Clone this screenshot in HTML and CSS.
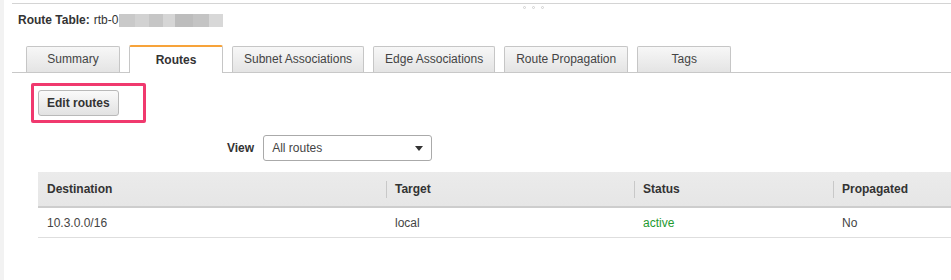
FILE: index.html
```html
<!DOCTYPE html>
<html lang="en">
<head>
    <meta charset="UTF-8">
    <meta name="viewport" content="width=device-width, initial-scale=1.0">
    <title>Route Table</title>
    <link rel="stylesheet" href="styles.css">
</head>
<body>
    <div class="panel">
        <div class="topline"></div>
        <div class="grip"><i></i><i></i><i></i></div>
        <div class="title"><b>Route Table:</b> rtb-0<span class="masked"></span></div>

        <ul class="tabs">
            <li class="tab">Summary</li>
            <li class="tab active">Routes</li>
            <li class="tab">Subnet Associations</li>
            <li class="tab">Edge Associations</li>
            <li class="tab">Route Propagation</li>
            <li class="tab">Tags</li>
        </ul>

        <div class="toolbar">
            <div class="highlight">
                <button class="btn">Edit routes</button>
            </div>
        </div>

        <div class="view-row">
            <label>View</label>
            <div class="select"><span>All routes</span><span class="caret"></span></div>
        </div>

        <table class="routes">
            <colgroup>
                <col style="width: 348px">
                <col style="width: 248px">
                <col style="width: 199px">
                <col>
            </colgroup>
            <thead>
                <tr>
                    <th>Destination</th>
                    <th>Target</th>
                    <th>Status</th>
                    <th>Propagated</th>
                </tr>
            </thead>
            <tbody>
                <tr>
                    <td>10.3.0.0/16</td>
                    <td>local</td>
                    <td class="ok">active</td>
                    <td>No</td>
                </tr>
            </tbody>
        </table>
    </div>
</body>
</html>
```

FILE: styles.css
```css
body {
    margin: 0;
    font-family: "Liberation Sans", Arial, sans-serif;
    font-size: 12px;
    color: #444;
    background: #fff;
    border-left: 4px solid #f2f2f2;
    height: 280px;
    box-sizing: border-box;
    overflow: hidden;
}
.panel {
    margin-left: 8px;
}
.topline {
    height: 3px;
    border-bottom: 1px solid #d4d4d4;
}
.grip {
    display: flex;
    gap: 6px;
    height: 5px;
    padding: 2px 0 0 511px;
}
.grip i {
    width: 3px;
    height: 3px;
    border: 1px solid #cfcfcf;
    border-radius: 50%;
    box-sizing: border-box;
}
.title {
    margin-top: 2px;
    padding-left: 6px;
    line-height: 14px;
    color: #333;
    display: flex;
    align-items: center;
}
.title b {
    margin-right: 4px;
}
.masked {
    display: inline-block;
    width: 104px;
    height: 13px;
    margin-left: 1px;
    background: linear-gradient(to right,
        #c9c9c9 0, #c9c9c9 16px, #d2d2d2 16px, #d2d2d2 30px, #c6c6c6 30px, #c6c6c6 44px,
        #d6d6d6 44px, #d6d6d6 56px, #bdbdbd 56px, #bdbdbd 74px, #c4c4c4 74px, #c4c4c4 90px,
        #d8d8d8 90px, #d8d8d8 104px);
}
.tabs {
    list-style: none;
    margin: 18px 0 0;
    padding: 0 0 0 14px;
    display: flex;
    align-items: flex-end;
    gap: 9px;
    height: 27px;
    border-bottom: 1px solid #c8c8c8;
}
.tab {
    box-sizing: border-box;
    height: 26px;
    min-width: 94px;
    padding: 0 11px;
    border: 1px solid #c6c6c6;
    border-bottom: none;
    border-radius: 2px 2px 0 0;
    background: linear-gradient(#f7f7f7, #e4e4e4);
    line-height: 25px;
    text-align: center;
    color: #444;
}
.tab.active {
    height: 28px;
    margin-bottom: -1px;
    background: #fff;
    border-top: 2px solid #f7a33a;
    line-height: 27px;
    font-weight: bold;
    color: #333;
}
.toolbar {
    display: flex;
    margin-top: 10px;
    padding-left: 19px;
}
.highlight {
    border: 3px solid #f0396e;
    border-radius: 2px;
    padding: 4px 24px 4px 4px;
}
.btn {
    display: block;
    height: 26px;
    padding: 0 8px;
    font-family: inherit;
    font-size: 12px;
    font-weight: bold;
    color: #333;
    border: 1px solid #b9b9b9;
    border-radius: 3px;
    background: linear-gradient(#fafafa, #e2e2e2);
}
.view-row {
    display: flex;
    align-items: center;
    gap: 9px;
    margin-top: 12px;
    padding-left: 215px;
}
.view-row label {
    font-weight: bold;
    color: #333;
}
.select {
    box-sizing: border-box;
    width: 169px;
    height: 26px;
    padding: 0 8px;
    border: 1px solid #aaa;
    border-radius: 3px;
    display: flex;
    align-items: center;
    justify-content: space-between;
    color: #444;
}
.caret {
    width: 0;
    height: 0;
    border-left: 4px solid transparent;
    border-right: 4px solid transparent;
    border-top: 5px solid #333;
}
.routes {
    margin: 11px 0 0 26px;
    width: 913px;
    border-collapse: collapse;
    table-layout: fixed;
}
.routes th {
    position: relative;
    height: 34px;
    padding: 0 9px;
    text-align: left;
    font-weight: bold;
    color: #333;
    background: linear-gradient(#ebebeb, #e6e6e6);
    border-bottom: 2px solid #cdcdcd;
}
.routes th + th::before {
    content: "";
    position: absolute;
    left: 0;
    top: 9px;
    height: 17px;
    border-left: 1px solid #c8c8c8;
}
.routes td {
    height: 29px;
    padding: 0 9px;
    border-bottom: 1px solid #dedede;
}
.routes .ok {
    color: #1f9a2f;
}
```
